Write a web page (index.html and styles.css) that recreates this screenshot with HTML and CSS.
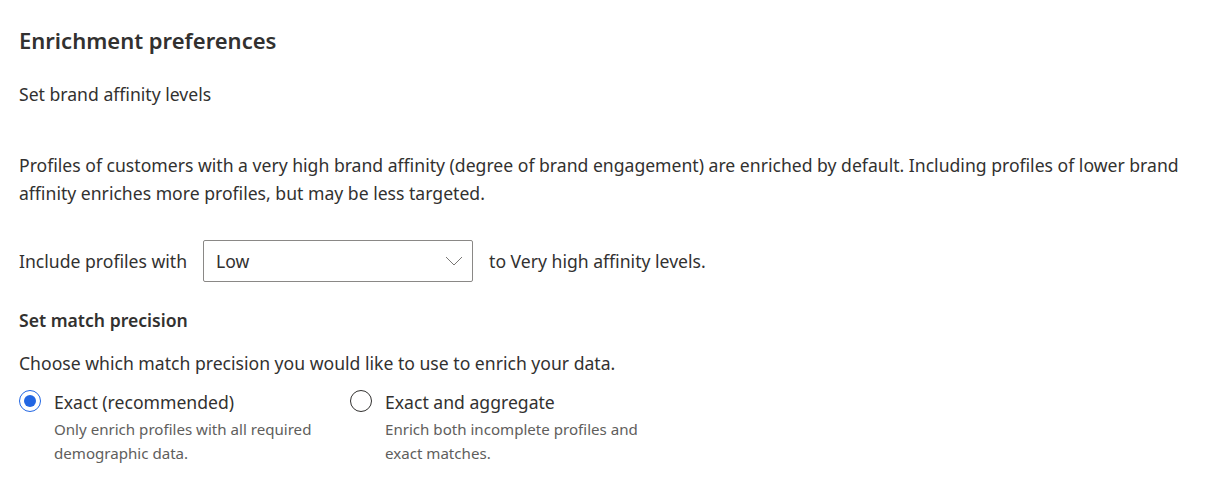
FILE: index.html
```html
<!DOCTYPE html>
<html>
<head>
<meta charset="utf-8">
<link rel="stylesheet" href="styles.css">
</head>
<body>
<div class="page">
  <h1 class="title">Enrichment preferences</h1>
  <p class="sub">Set brand affinity levels</p>
  <p class="desc">Profiles of customers with a very high brand affinity (degree of brand engagement) are enriched by default. Including profiles of lower brand affinity enriches more profiles, but may be less targeted.</p>
  <div class="include-row">
    <span>Include profiles with</span>
    <div class="dropdown">
      <span>Low</span>
      <svg class="chev" width="18" height="10" viewBox="0 0 18 10"><path d="M1 1 L9 9 L17 1" fill="none" stroke="#797775" stroke-width="1"/></svg>
    </div>
    <span>to Very high affinity levels.</span>
  </div>
  <h2 class="section">Set match precision</h2>
  <p class="choose">Choose which match precision you would like to use to enrich your data.</p>
  <div class="radios">
    <div class="radio">
      <span class="circle checked"><span class="dot"></span></span>
      <div class="rtext">
        <div class="rlabel">Exact (recommended)</div>
        <div class="rdesc">Only enrich profiles with all required demographic data.</div>
      </div>
    </div>
    <div class="radio">
      <span class="circle"></span>
      <div class="rtext">
        <div class="rlabel">Exact and aggregate</div>
        <div class="rdesc">Enrich both incomplete profiles and exact matches.</div>
      </div>
    </div>
  </div>
</div>
</body>
</html>
```

FILE: styles.css
```css
html, body {
  margin: 0;
  padding: 0;
  background: #ffffff;
}
body {
  font-family: "Noto Sans", "Open Sans", sans-serif;
  color: #323130;
  font-size: 17.6px;
}
.page {
  padding: 22px 19px 0 19px;
}
.title {
  margin: 0;
  font-size: 22px;
  font-weight: 600;
  line-height: 36px;
}
.sub {
  margin: 25px 0 0 0;
  line-height: 22px;
}
.desc {
  margin: 46px 0 0 0;
  line-height: 28px;
  max-width: 1180px;
}
.include-row {
  margin-top: 33px;
  display: flex;
  align-items: center;
  gap: 16px;
  height: 42px;
}
.dropdown {
  box-sizing: border-box;
  width: 270px;
  height: 42px;
  border: 1px solid #8a8886;
  border-radius: 2px;
  display: flex;
  align-items: center;
  justify-content: space-between;
  padding: 0 9px 0 12px;
}
.chev {
  display: block;
}
.section {
  margin: 26px 0 0 0;
  font-size: 17.6px;
  font-weight: 600;
  line-height: 24px;
}
.choose {
  margin: 20px 0 0 0;
  line-height: 22px;
}
.radios {
  margin-top: 17px;
  display: flex;
}
.radio {
  display: flex;
  gap: 13px;
  width: 331px;
}
.circle {
  box-sizing: border-box;
  width: 22px;
  height: 22px;
  border-radius: 50%;
  border: 1px solid #323130;
  display: flex;
  align-items: center;
  justify-content: center;
  flex: none;
  margin-top: -1px;
}
.circle.checked {
  border-color: #2266e3;
}
.dot {
  width: 12px;
  height: 12px;
  border-radius: 50%;
  background: #2266e3;
}
.rlabel {
  line-height: 22px;
}
.rdesc {
  margin-top: 4px;
  font-size: 15.1px;
  line-height: 24px;
  color: #605e5c;
  width: 270px;
}
```
